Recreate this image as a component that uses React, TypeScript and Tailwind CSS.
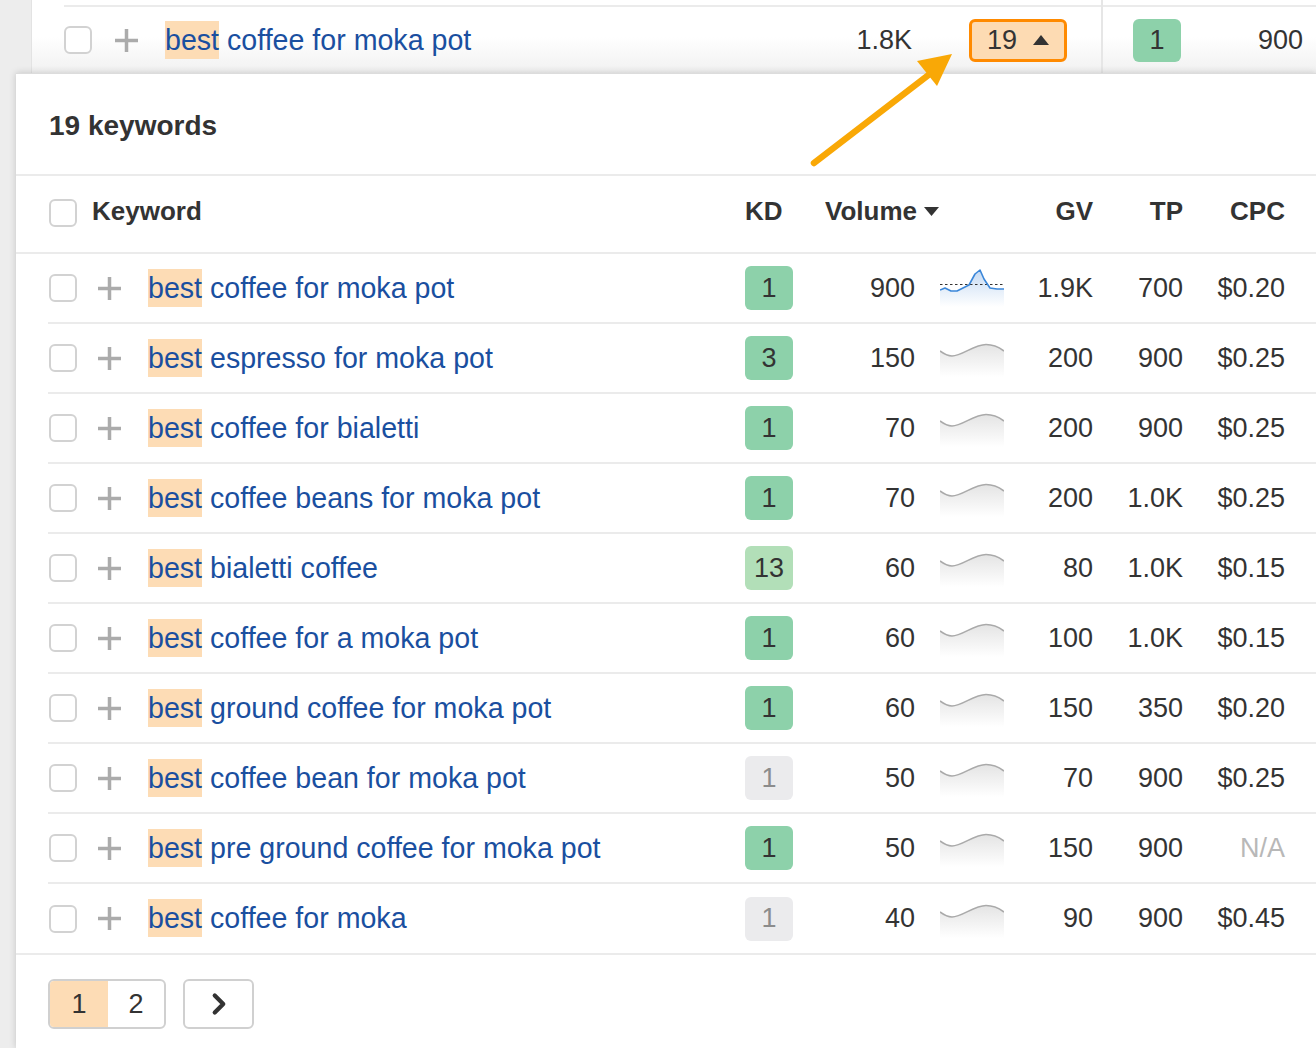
import { ChevronRight } from 'lucide-react';

type Tone = 'green' | 'light' | 'gray';

const KEYWORDS: {
  rest: string;
  kd: number;
  tone: Tone;
  volume: string;
  gv: string;
  tp: string;
  cpc: string;
  trend?: boolean;
}[] = [
  { rest: 'coffee for moka pot', kd: 1, tone: 'green', volume: '900', gv: '1.9K', tp: '700', cpc: '$0.20', trend: true },
  { rest: 'espresso for moka pot', kd: 3, tone: 'green', volume: '150', gv: '200', tp: '900', cpc: '$0.25' },
  { rest: 'coffee for bialetti', kd: 1, tone: 'green', volume: '70', gv: '200', tp: '900', cpc: '$0.25' },
  { rest: 'coffee beans for moka pot', kd: 1, tone: 'green', volume: '70', gv: '200', tp: '1.0K', cpc: '$0.25' },
  { rest: 'bialetti coffee', kd: 13, tone: 'light', volume: '60', gv: '80', tp: '1.0K', cpc: '$0.15' },
  { rest: 'coffee for a moka pot', kd: 1, tone: 'green', volume: '60', gv: '100', tp: '1.0K', cpc: '$0.15' },
  { rest: 'ground coffee for moka pot', kd: 1, tone: 'green', volume: '60', gv: '150', tp: '350', cpc: '$0.20' },
  { rest: 'coffee bean for moka pot', kd: 1, tone: 'gray', volume: '50', gv: '70', tp: '900', cpc: '$0.25' },
  { rest: 'pre ground coffee for moka pot', kd: 1, tone: 'green', volume: '50', gv: '150', tp: '900', cpc: 'N/A' },
  { rest: 'coffee for moka', kd: 1, tone: 'gray', volume: '40', gv: '90', tp: '900', cpc: '$0.45' },
];

const TONES: Record<Tone, string> = {
  green: 'bg-[#8dd1aa] text-[#333]',
  light: 'bg-[#b2dfb8] text-[#333]',
  gray: 'bg-[#ebebed] text-[#8c8c8c]',
};

function Checkbox() {
  return <div className="h-[28px] w-[28px] shrink-0 rounded-[6px] border-2 border-[#d2d2d2] bg-white" />;
}

function Plus() {
  return (
    <svg width="25" height="25" viewBox="0 0 25 25" className="shrink-0">
      <path d="M12.5 1v23M1 12.5h23" stroke="#ababab" strokeWidth="3.5" />
    </svg>
  );
}

function Keyword({ rest }: { rest: string }) {
  return (
    <span className="whitespace-nowrap text-[28.6px] text-[#1a4fa0]">
      <span className="bg-[#fddcb5] py-[3px]">best</span> {rest}
    </span>
  );
}

function Spark({ trend, id }: { trend?: boolean; id: number }) {
  if (trend) {
    const line = 'M0 21 L5 19 L11 22 L17 22 L29 16 L35 5 L40 1 L44 10 L50 19 L57 20 L64 20';
    return (
      <svg width="64" height="38" viewBox="0 0 64 38">
        <defs>
          <linearGradient id={`sp${id}`} x1="0" y1="0" x2="0" y2="1">
            <stop offset="0" stopColor="#c5daf3" />
            <stop offset="1" stopColor="#ffffff" />
          </linearGradient>
        </defs>
        <path d={`${line} L64 38 L0 38 Z`} fill={`url(#sp${id})`} />
        <path d="M0 15.5H64" stroke="#333" strokeWidth="1.2" strokeDasharray="2.5 2.5" />
        <path d={line} fill="none" stroke="#3b87d9" strokeWidth="1.6" strokeLinejoin="round" />
      </svg>
    );
  }
  const wave = 'M0 12 C4 15, 7 17, 12 17 C22 17, 34 5.5, 46 5.5 C54 5.5, 60 9, 64 12';
  return (
    <svg width="64" height="38" viewBox="0 0 64 38">
      <defs>
        <linearGradient id={`sp${id}`} x1="0" y1="0" x2="0" y2="1">
          <stop offset="0" stopColor="#e4e4e4" />
          <stop offset="1" stopColor="#ffffff" />
        </linearGradient>
      </defs>
      <path d={`${wave} L64 38 L0 38 Z`} fill={`url(#sp${id})`} />
      <path d={wave} fill="none" stroke="#aaaaaa" strokeWidth="1.6" />
    </svg>
  );
}

export default function App() {
  return (
    <div className="relative flex h-[1048px] w-[1316px] flex-col overflow-hidden bg-[#ededed] font-['Liberation_Sans',Arial,sans-serif] text-[#333]">
      {/* parent table row behind the popup */}
      <div className="flex h-[73px] shrink-0">
        <div className="w-[32px] border-r border-[#e3e3e3]" />
        <div className="flex flex-1 bg-gradient-to-b from-white via-white to-[#f1f1f1]">
          <div className="flex w-[1069px] flex-col">
            <div className="h-[5px]" />
            <div className="ml-[32px] flex flex-1 items-center border-t-2 border-[#ebebeb] pr-[34px]">
              <Checkbox />
              <div className="ml-[22px]">
                <Plus />
              </div>
              <div className="ml-[26px] flex-1">
                <Keyword rest="coffee for moka pot" />
              </div>
              <span className="text-[27px]">1.8K</span>
              <div className="ml-[57px] flex h-[43px] w-[98px] items-center rounded-[6px] border-[3px] border-[#ff8a00] bg-[#fddbb3] pl-[15px]">
                <span className="text-[27px]">19</span>
                <svg width="16" height="10" viewBox="0 0 16 10" className="ml-[16px]">
                  <path d="M8 0L16 10H0Z" fill="#333" />
                </svg>
              </div>
            </div>
          </div>
          <div className="flex flex-1 flex-col border-l-2 border-[#e6e6e6]">
            <div className="h-[5px]" />
            <div className="flex flex-1 items-center border-t-2 border-[#ebebeb] pl-[30px] pr-[13px]">
              <div className="flex h-[43px] w-[48px] items-center justify-center rounded-[6px] bg-[#8dd1aa] text-[27px]">1</div>
              <span className="flex-1 text-right text-[27px]">900</span>
            </div>
          </div>
        </div>
      </div>

      {/* keyword popup */}
      <div className="flex flex-1">
        <div className="w-[16px]" />
        <div className="flex-1 border-t border-[#dcdcdc] bg-white shadow-[0_0_7px_rgba(0,0,0,0.18)]">
          <div className="flex h-[102px] items-center border-b-2 border-[#ebebeb] pl-[33px] pt-[3px]">
            <span className="text-[28px] font-bold">19 keywords</span>
          </div>

          <div className="flex h-[78px] items-center border-b-2 border-[#ebebeb] pb-[6px] pl-[33px] text-[26px] font-bold">
            <div className="mt-[4px]">
              <Checkbox />
            </div>
            <span className="ml-[15px] flex-1">Keyword</span>
            <span className="w-[48px]">KD</span>
            <div className="flex w-[211px] items-center gap-[7px] pl-[32px]">
              Volume
              <svg width="15" height="9" viewBox="0 0 15 9">
                <path d="M0 0H15L7.5 9Z" fill="#333" />
              </svg>
            </div>
            <span className="w-[89px] text-right">GV</span>
            <span className="w-[90px] text-right">TP</span>
            <span className="w-[102px] text-right">CPC</span>
            <span className="w-[31px]" />
          </div>

          <div className="ml-[32px]">
            {KEYWORDS.map((k, i) => (
              <div
                key={i}
                className={`flex items-center text-[27px] ${i < KEYWORDS.length - 1 ? 'h-[70px] border-b-2 border-[#ebebeb]' : 'h-[69px]'}`}
              >
                <div className="ml-[1px]">
                  <Checkbox />
                </div>
                <div className="ml-[20px]">
                  <Plus />
                </div>
                <div className="ml-[26px] flex-1">
                  <Keyword rest={k.rest} />
                </div>
                <div className={`flex h-[44px] w-[48px] items-center justify-center rounded-[6px] ${TONES[k.tone]}`}>{k.kd}</div>
                <span className="w-[122px] text-right">{k.volume}</span>
                <div className="ml-[25px] flex h-[38px] w-[64px] items-center">
                  <Spark trend={k.trend} id={i} />
                </div>
                <span className="w-[89px] text-right">{k.gv}</span>
                <span className="w-[90px] text-right">{k.tp}</span>
                <span className={`w-[102px] text-right ${k.cpc === 'N/A' ? 'text-[#b8b8b8]' : ''}`}>{k.cpc}</span>
                <span className="w-[31px]" />
              </div>
            ))}
          </div>

          <div className="flex gap-[17px] border-t-2 border-[#ebebeb] pl-[32px] pt-[24px] text-[27px]">
            <div className="flex h-[50px] overflow-hidden rounded-[6px] border-2 border-[#d0d0d0]">
              <div className="flex w-[58px] items-center justify-center bg-[#fddcb5]">1</div>
              <div className="flex w-[56px] items-center justify-center">2</div>
            </div>
            <div className="flex h-[50px] w-[71px] items-center justify-center rounded-[6px] border-2 border-[#d0d0d0]">
              <ChevronRight size={34} strokeWidth={3} color="#333" />
            </div>
          </div>
        </div>
      </div>

      {/* callout arrow pointing at the count badge */}
      <svg className="pointer-events-none absolute left-0 top-0" width="1316" height="200" viewBox="0 0 1316 200">
        <path d="M814 163L935 70" stroke="#f9a806" strokeWidth="6.5" strokeLinecap="round" />
        <path d="M952 54L917 61L937 86Z" fill="#f9a806" />
      </svg>
    </div>
  );
}
